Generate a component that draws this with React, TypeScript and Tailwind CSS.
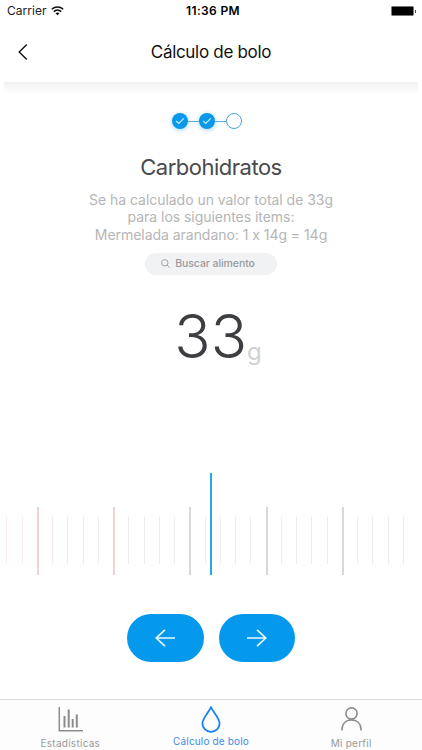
import React from 'react';

const TICK_COUNT = 27;
const FIRST_MAJOR = 2;
const LAST_LOW_TICK = 7;

const StatusBar: React.FC = () => (
  <div className="grid h-[22px] grid-cols-3 items-center pl-[7px] pr-[6px] text-black">
    <div className="flex items-center gap-[5px]">
      <span className="text-[12px] leading-[22px] tracking-[0.02px] text-[#222]">Carrier</span>
      <svg width="13" height="10" viewBox="0 0 13 10" fill="none" stroke="#111" strokeWidth="1.5">
        <path d="M0.8 3.3C4 0.3 9 0.3 12.2 3.3" />
        <path d="M2.8 5.6C4.9 3.6 8.1 3.6 10.2 5.6" />
        <path d="M6.5 9.3L4.5 7.2C5.7 6.2 7.3 6.2 8.5 7.2Z" fill="#111" stroke="none" />
      </svg>
    </div>
    <span className="pl-[3px] text-center text-[12px] font-semibold leading-[22px] tracking-[0.35px] whitespace-nowrap">11:36 PM</span>
    <div className="flex items-center justify-end gap-px">
      <div className="h-[10px] w-[23px] rounded-[1.5px] border border-[#777] bg-black" />
      <div className="h-[3px] w-px bg-[#444]" />
    </div>
  </div>
);

const Header: React.FC = () => (
  <header className="grid h-[60px] grid-cols-[60px_1fr_60px] items-center">
    <button className="pl-[18px]" aria-label="Volver">
      <svg width="10" height="16" viewBox="0 0 10 16" fill="none" stroke="#111" strokeWidth="1.4">
        <path d="M8.8 0.6L1.2 8L8.8 15.4" />
      </svg>
    </button>
    <h1 className="text-center text-[17px] leading-6 tracking-[-0.3px] text-[#111]">Cálculo de bolo</h1>
  </header>
);

const StepDone: React.FC = () => (
  <div className="flex h-4 w-4 items-center justify-center rounded-full bg-[#0a98ec] shadow-[0_1px_5px_rgba(10,152,236,0.4)]">
    <svg width="10" height="8" viewBox="0 0 10 8" fill="none" stroke="#c9ecff" strokeWidth="1.2">
      <path d="M1.2 4L3.7 6.5L8.8 1.3" />
    </svg>
  </div>
);

const Steps: React.FC = () => (
  <div className="flex items-center justify-center pr-[8px]">
    <StepDone />
    <div className="h-px w-[11px] bg-[#5eabdc]" />
    <StepDone />
    <div className="h-px w-[11px] bg-[#5eabdc]" />
    <div className="h-4 w-4 rounded-full border border-[#4ba3da] bg-white" />
  </div>
);

const tickClass = (index: number) => {
  const major = (index - FIRST_MAJOR) % 5 === 0;
  const low = index <= LAST_LOW_TICK;

  if (major) {
    return low ? 'h-[68px] w-[2px] bg-[#f3d2d6]' : 'h-[68px] w-[2px] bg-[#d8d8d9]';
  }
  return low ? 'h-[47px] w-px bg-[#fae7e9]' : 'h-[47px] w-px bg-[#ededee]';
};

const Ruler: React.FC = () => (
  <div className="relative flex h-[102px] items-end pl-[6.4px]">
    {Array.from({ length: TICK_COUNT }, (_, index) => (
      <div key={index} className="flex h-[68px] w-[15.25px] shrink-0 items-center">
        <div className={tickClass(index)} />
      </div>
    ))}
    {/* current value marker */}
    <div className="absolute left-[210px] top-0 h-[102px] w-[2px] bg-[#2ba6e1]" />
  </div>
);

const ArrowButton: React.FC<{ label: string; path: string }> = ({ label, path }) => (
  <button
    aria-label={label}
    className="flex h-12 w-[76.5px] items-center justify-center rounded-full bg-[#0599ee]"
  >
    <svg width="20" height="18" viewBox="0 0 20 18" fill="none" stroke="#e9f7ff" strokeWidth="1.7">
      <path d={path} />
    </svg>
  </button>
);

const TabBar: React.FC = () => (
  <nav className="grid h-[51px] grid-cols-3 border-t border-[#dcdcde] bg-[#fdfdfd] text-[10px] leading-3 text-[#999]">
    <div className="flex flex-col items-center pt-[7px]">
      <svg width="25" height="25" viewBox="0 0 25 25" fill="none" stroke="#8c8c8c" strokeWidth="1.5">
        <path d="M1.3 0V23.8H25" />
        <path strokeWidth="2" d="M6.5 9V20.5M10.7 2.5V20.5M14.7 12V20.5M18.8 7.5V20.5" />
      </svg>
      <span className="mt-[5px] tracking-[0.27px]">Estadísticas</span>
    </div>
    <div className="flex flex-col items-center pt-[6px] text-[#3d8cf0]">
      <svg width="20" height="27" viewBox="0 0 20 27" fill="none" stroke="#1683f5" strokeWidth="1.8">
        <path d="M10 1.4C7.4 6.4 1.4 12.3 1.4 17.5C1.4 22.3 5.2 25.8 10 25.8S18.6 22.3 18.6 17.5C18.6 12.3 12.6 6.4 10 1.4Z" />
      </svg>
      <span className="mt-[2px] tracking-[0.15px]">Cálculo de bolo</span>
    </div>
    <div className="flex flex-col items-center pt-[7px]">
      <svg width="21" height="24" viewBox="0 0 21 24" fill="none" stroke="#8c8c8c" strokeWidth="1.6">
        <circle cx="10.5" cy="6.5" r="5.6" />
        <path d="M1 23.5V21.8C1.4 16.2 5.2 12.9 10.5 12.9S19.6 16.2 20 21.8V23.5" />
      </svg>
      <span className="mt-[6px] pr-px tracking-[0.25px]">Mi perfil</span>
    </div>
  </nav>
);

const App: React.FC = () => {
  return (
    <div className="flex h-[750px] w-[422px] flex-col overflow-hidden bg-white font-['Inter','Liberation_Sans',sans-serif]">
      <StatusBar />
      <Header />
      <div className="mx-1 h-3 bg-gradient-to-b from-[#f1f1f1] to-white" />

      <main className="flex flex-1 flex-col">
        <div className="pt-[19px]">
          <Steps />
        </div>
        <h2 className="mt-[23px] text-center text-[22px] leading-[30px] tracking-[-0.5px] text-[#4a4a4c]">Carbohidratos</h2>
        <p className="mt-[9px] text-center text-[14px] leading-[17.3px] tracking-[-0.04px] text-[#b5b5b6] [font-feature-settings:'calt'_0]">
          Se ha calculado un valor total de 33g
          <br />
          para los siguientes items:
          <br />
          Mermelada arandano: 1 x 14g = 14g
        </p>
        <div className="mx-auto mt-[10px] flex h-[22px] w-[132px] items-center justify-center gap-[5px] rounded-full bg-[#f1f2f4] pr-[6px] text-[#9b9b9e]">
          <svg width="9" height="9" viewBox="0 0 9 9" fill="none" stroke="currentColor" strokeWidth="0.9">
            <circle cx="3.8" cy="3.8" r="3.2" />
            <path d="M6.2 6.2L8.6 8.6" />
          </svg>
          <span className="text-[10.5px] font-medium tracking-[-0.07px]">Buscar alimento</span>
        </div>

        <div className="mt-[21px] flex h-[80px] items-baseline justify-center pl-[14px]">
          <span className="text-[60px] font-light leading-[80px] text-[#3d3e42]">33</span>
          <span className="relative top-[2px] text-[24px] text-[#d2d2d3]">g</span>
        </div>

        <div className="mt-[97px]">
          <Ruler />
        </div>

        <div className="mt-[39px] flex justify-center gap-[15px]">
          <ArrowButton label="Anterior" path="M20 9H1M10 0.8L1.2 9L10 17.2" />
          <ArrowButton label="Siguiente" path="M0 9H19M10 0.8L18.8 9L10 17.2" />
        </div>
      </main>

      <TabBar />
    </div>
  );
};

export default App;
